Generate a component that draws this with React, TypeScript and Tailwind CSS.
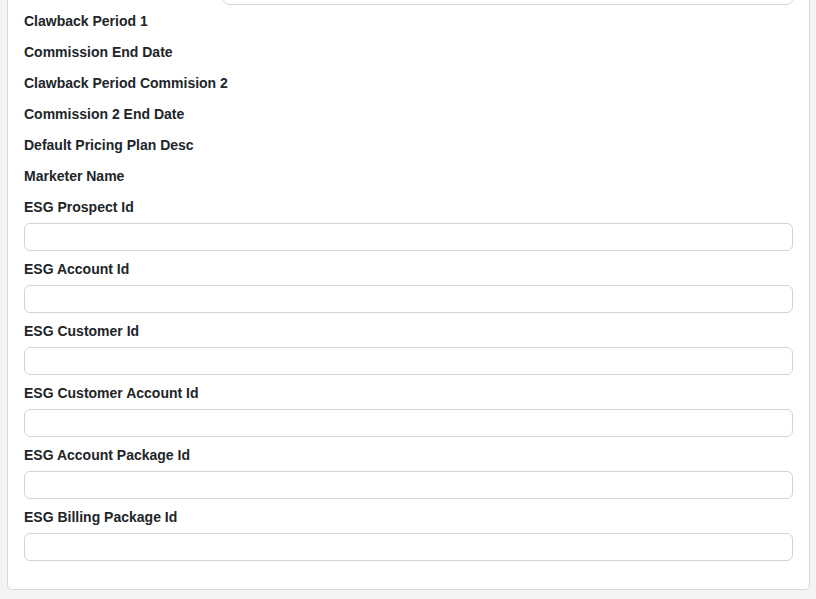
import React from "react";

const plain = [
  "Clawback Period 1",
  "Commission End Date",
  "Clawback Period Commision 2",
  "Commission 2 End Date",
  "Default Pricing Plan Desc",
  "Marketer Name",
];

const withInput = [
  "ESG Prospect Id",
  "ESG Account Id",
  "ESG Customer Id",
  "ESG Customer Account Id",
  "ESG Account Package Id",
  "ESG Billing Package Id",
];

function Label({ text }: { text: string }) {
  return (
    <div className="h-[31px] flex items-center">
      <span className="text-[14px] leading-[21px] font-bold text-[#212529]">{text}</span>
    </div>
  );
}

export default function App() {
  return (
    <div
      className="min-h-[599px] w-full bg-[#f4f4f4] overflow-hidden"
      style={{ fontFamily: '"Liberation Sans", Arial, sans-serif' }}
    >
      <div className="ml-[7px] w-[803px] -mt-[40px] bg-white border border-[#d9d9d9] rounded-[5px] px-4 pt-[16px] pb-[25px]">
        <div className="ml-[199px] h-[28px] border border-[#ced4da] rounded-[6px] bg-white" />
        <div className="h-[1px]" />
        {plain.map((t) => (
          <Label key={t} text={t} />
        ))}
        {withInput.map((t) => (
          <div key={t}>
            <Label text={t} />
            <div className="h-[28px] border border-[#ced4da] rounded-[6px] bg-white mb-[3px]" />
          </div>
        ))}
      </div>
    </div>
  );
}
